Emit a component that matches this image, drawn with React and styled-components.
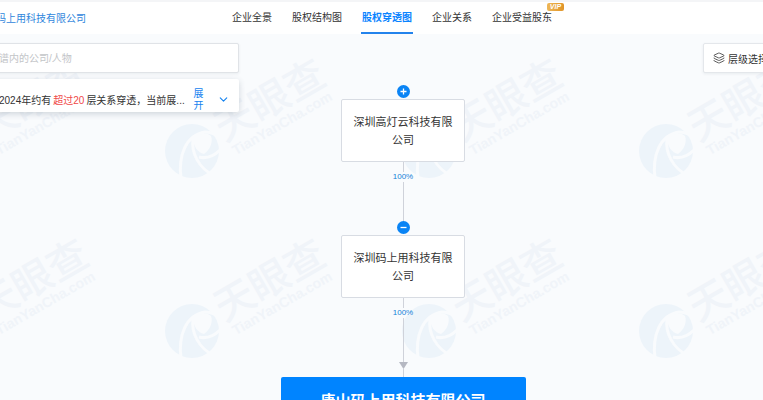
import React from "react";
import styled, { createGlobalStyle, css } from "styled-components";
import { ChevronDown, Layers } from "lucide-react";

const GlobalStyle = createGlobalStyle`
  * { box-sizing: border-box; }
  body {
    margin: 0;
    font-family: "Liberation Sans", "Noto Sans CJK SC", sans-serif;
    font-size: 10px;
    color: #333;
    background: #f9fbfd;
  }
  button, input { font: inherit; color: inherit; }
`;

const Page = styled.div`
  display: flex;
  flex-direction: column;
  height: 100vh;
  overflow: hidden;
`;

const Header = styled.header`
  display: flex;
  flex: none;
  height: 34px;
  border-top: 2px solid #f4f5f7;
  background: #fff;
`;

const CompanyLink = styled.a`
  display: flex;
  align-items: center;
  justify-content: flex-end;
  width: 86px;
  margin-right: 145px;
  padding-bottom: 2px;
  overflow: hidden;
  white-space: nowrap;
  color: #2f86dc;
  text-decoration: none;
`;

const Tabs = styled.nav`
  display: flex;
  gap: 18px;
`;

const Tab = styled.button`
  position: relative;
  padding: 2px 1px 0;
  border: 0;
  border-bottom: 2px solid transparent;
  background: none;
  line-height: 16px;
  white-space: nowrap;
  ${(p) =>
    p.$active &&
    css`
      color: #0a84ff;
      border-bottom-color: #2383ec;
      font-weight: 700;
    `}
`;

const VipBadge = styled.span`
  position: absolute;
  top: 1px;
  right: -11px;
  width: 17px;
  border-radius: 2px;
  background: linear-gradient(90deg, #eeb757, #e09428);
  color: #fff;
  font-size: 7px;
  font-style: italic;
  font-weight: 700;
  line-height: 8px;
  text-align: center;
`;

const Canvas = styled.main`
  position: relative;
  flex: 1;
  overflow: hidden;
`;

const WatermarkLayer = styled.div`
  position: absolute;
  inset: 0 -237px 0 -90px;
  display: grid;
  grid-template-columns: repeat(auto-fill, 237px);
  grid-auto-rows: 180px;
  overflow: hidden;
  pointer-events: none;
`;

const FloatingTools = styled.div`
  position: absolute;
  inset: 9px 0 auto -8px;
  z-index: 1;
  display: flex;
  align-items: flex-start;
  justify-content: space-between;
`;

const SearchColumn = styled.div`
  display: flex;
  flex-direction: column;
  gap: 6px;
  width: 247px;
`;

const SearchInput = styled.input`
  height: 30px;
  padding: 0 4px 0 6px;
  border: 1px solid #e0e3e7;
  border-radius: 2px;
  background: #fff;
  box-shadow: 0 1px 3px rgba(40, 60, 80, 0.08);
  &::placeholder {
    color: #c3c5c8;
    opacity: 1;
  }
`;

const Notice = styled.section`
  display: flex;
  align-items: center;
  height: 33px;
  padding: 8px 9px 0 7px;
  border-radius: 2px;
  background: #fff;
  box-shadow: 0 2px 6px rgba(40, 60, 80, 0.2);
`;

const NoticeText = styled.p`
  flex: 1;
  margin: 0;
  white-space: nowrap;
`;

const Highlight = styled.em`
  margin: 0 2px;
  color: #f04848;
  font-style: normal;
`;

const ExpandButton = styled.button`
  display: flex;
  align-items: center;
  gap: 13px;
  padding: 0;
  border: 0;
  background: none;
  color: #1482f0;
  line-height: 12px;
`;

const ExpandLabel = styled.span`
  width: 11px;
`;

const LevelButton = styled.button`
  display: flex;
  align-items: center;
  gap: 3px;
  height: 30px;
  margin-right: -21px;
  padding: 0 15px 0 9px;
  border: 1px solid #e4e7eb;
  border-radius: 2px;
  background: #fff;
  box-shadow: 0 1px 3px rgba(40, 60, 80, 0.08);
  white-space: nowrap;
`;

const Tree = styled.div`
  position: relative;
  display: flex;
  flex-direction: column;
  align-items: center;
  padding: 51px 0 0 43px;
`;

const Toggle = styled.button`
  display: grid;
  place-items: center;
  width: 13px;
  height: 13px;
  margin-bottom: 1px;
  padding: 0;
  border: 0;
  border-radius: 50%;
  background: #0a84f5;
`;

const Company = styled.div`
  width: 124px;
  padding: 13px 8px 12px;
  border: 1px solid #d8dce3;
  border-radius: 2px;
  background: #fff;
  font-size: 11px;
  line-height: 18px;
  text-align: center;
`;

const Connector = styled.div`
  width: 1px;
  height: ${(p) => p.$length}px;
  background: #cfd2da;
`;

const Share = styled.span`
  color: #1482d8;
  font-size: 8px;
  line-height: 10px;
`;

const ArrowHead = styled.svg`
  display: block;
`;

const RootCompany = styled.div`
  width: 245px;
  padding: 13px 16px;
  border-radius: 2px;
  background: #0084ff;
  color: #fff;
  font-size: 15px;
  font-weight: 700;
  line-height: 22px;
  text-align: center;
`;

const TABS = [
  { label: "企业全景" },
  { label: "股权结构图" },
  { label: "股权穿透图", active: true },
  { label: "企业关系" },
  { label: "企业受益股东", vip: true },
];

const MARKS = Array.from({ length: 8 }, (_, i) => i);

function Watermark() {
  return (
    <svg width="237" height="180" viewBox="0 0 237 180" aria-hidden="true">
      <circle cx="45" cy="117" r="27" fill="#edf4fa" />
      <path d="M46 104c5-5 14-6 18-2 2 5 0 13-7 18-6-1-11-8-11-16z" fill="#f9fbfd" />
      <g fill="none" stroke="#f9fbfd" strokeWidth="3">
        <path d="M34 145c-3-24 5-44 24-47 7 0 12 3 15 8" />
        <path d="M46 105c-2 14 6 29 20 36" />
        <path d="M52 123c8 2 15-1 21-7" />
      </g>
      <g fill="#f0f4f9" transform="translate(82 122) rotate(-30)">
        <text x="3" y="-14" fontSize="40" fontWeight="500">天眼查</text>
        <text x="6" y="3" fontSize="14" fontWeight="700" fontFamily="Liberation Sans, sans-serif">
          TianYanCha.com
        </text>
      </g>
    </svg>
  );
}

function ToggleIcon({ collapsed }) {
  return (
    <svg width="9" height="9" viewBox="0 0 9 9" stroke="#fff" strokeWidth="1.3" aria-hidden="true">
      <path d={collapsed ? "M1.5 4.5h6M4.5 1.5v6" : "M1.5 4.5h6"} />
    </svg>
  );
}

function Shareholder({ name, collapsed }) {
  return (
    <>
      <Toggle aria-label={collapsed ? "展开股东" : "收起股东"}>
        <ToggleIcon collapsed={collapsed} />
      </Toggle>
      <Company>{name}</Company>
      <Connector $length={10} />
      <Share>100%</Share>
    </>
  );
}

export default function App() {
  return (
    <Page>
      <GlobalStyle />
      <Header>
        <CompanyLink href="#">码上用科技有限公司</CompanyLink>
        <Tabs>
          {TABS.map((tab) => (
            <Tab key={tab.label} $active={tab.active}>
              {tab.label}
              {tab.vip && <VipBadge>VIP</VipBadge>}
            </Tab>
          ))}
        </Tabs>
      </Header>
      <Canvas>
        <WatermarkLayer>
          {MARKS.map((mark) => (
            <Watermark key={mark} />
          ))}
        </WatermarkLayer>
        <FloatingTools>
          <SearchColumn>
            <SearchInput aria-label="搜索公司或人物" placeholder="谱内的公司/人物" />
            <Notice>
              <NoticeText>
                2024年约有<Highlight>超过20</Highlight>层关系穿透，当前展...
              </NoticeText>
              <ExpandButton>
                <ExpandLabel>展开</ExpandLabel>
                <ChevronDown size={13} strokeWidth={2} />
              </ExpandButton>
            </Notice>
          </SearchColumn>
          <LevelButton>
            <Layers size={12} strokeWidth={1.6} />
            层级选择
          </LevelButton>
        </FloatingTools>
        <Tree>
          <Shareholder name="深圳高灯云科技有限公司" collapsed />
          <Connector $length={39} />
          <Shareholder name="深圳码上用科技有限公司" />
          <Connector $length={44} />
          <ArrowHead width="9" height="7" viewBox="0 0 9 7" fill="#b5b8c2">
            <path d="M0 0h9L4.5 7z" />
          </ArrowHead>
          <Connector $length={8} />
          <RootCompany>唐山码上用科技有限公司</RootCompany>
        </Tree>
      </Canvas>
    </Page>
  );
}
